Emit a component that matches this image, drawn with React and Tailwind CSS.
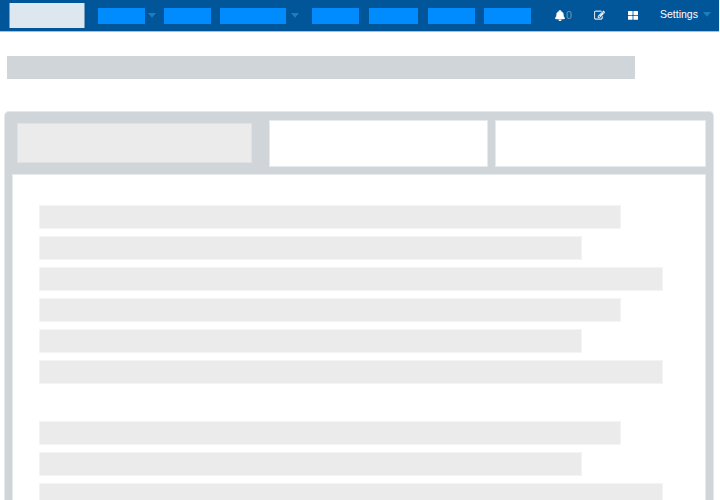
import React from "react";
import { FaBell } from "react-icons/fa";

function Caret() {
  return (
    <svg className="h-[5px] w-2 shrink-0" viewBox="0 0 8 5">
      <path d="M0 0h8L4 4.8z" fill="#1b7fbe" />
    </svg>
  );
}

function NavItem({ className }) {
  return <div className={`h-4 shrink-0 bg-[#008cff] ${className}`} />;
}

function PencilSquare() {
  return (
    <svg
      className="h-[11px] w-[11px] shrink-0"
      viewBox="0 0 1792 1792"
      fill="#f1f6fa"
      stroke="#f1f6fa"
      strokeWidth="50"
    >
      <path d="M888 1184l116-116-152-152-116 116v56h96v96h56zm440-720q-16-16-33 1l-350 350q-17 17-1 33t33-1l350-350q17-17 1-33zm80 594v190q0 119-84.5 203.5t-203.5 84.5h-832q-119 0-203.5-84.5t-84.5-203.5v-832q0-119 84.5-203.5t203.5-84.5h832q63 0 117 25 15 7 18 23 3 17-9 29l-49 49q-14 14-32 8-23-6-45-6h-832q-66 0-113 47t-47 113v832q0 66 47 113t113 47h832q66 0 113-47t47-113v-126q0-13 9-22l64-64q15-15 35-7t20 29zm-96-738l288 288-672 672h-288v-288zm444 132l-92 92-288-288 92-92q28-28 68-28t68 28l152 152q28 28 28 68t-28 68z" />
    </svg>
  );
}

function Line({ className }) {
  return <div className={`h-6 shrink-0 border border-[#f4f4f4] bg-[#ebebeb] ${className}`} />;
}

function LineGroup() {
  return (
    <>
      <Line className="w-[582px]" />
      <Line className="w-[543px]" />
      <Line className="w-[624px]" />
    </>
  );
}

export default function App() {
  return (
    <div className="flex h-[500px] w-[720px] flex-col overflow-hidden bg-white font-['Liberation_Sans',Arial,sans-serif]">
      <header className="flex h-8 w-[719px] shrink-0 items-start border-b border-[#9fc1dc] bg-[#005699]">
        <div className="ml-[9px] mt-[3px] h-[25px] w-[76px] shrink-0 rounded-[1px] border-x border-[#6f9fc5] bg-[#dce7f0]" />
        <nav className="ml-[13px] mt-2 flex h-4 items-start">
          <NavItem className="w-[47px]" />
          <div className="mt-[5px] flex w-[19px] pl-[3px]"><Caret /></div>
          <NavItem className="w-[47px]" />
          <NavItem className="ml-[9px] w-[66px]" />
          <div className="mt-[5px] flex w-[26px] pl-[5px]"><Caret /></div>
          <NavItem className="w-[47px]" />
          <NavItem className="ml-[10px] w-[49px]" />
          <NavItem className="ml-[10px] w-[47px]" />
          <NavItem className="ml-[9px] w-[47px]" />
        </nav>
        <div className="ml-6 mt-[10px] flex h-[11px] w-[39px] shrink-0 items-center">
          <FaBell className="h-[11px] w-[10px] shrink-0 stroke-white stroke-[20] text-white" />
          <span className="ml-px text-[10.5px] leading-[11px] text-[#8294a6]">0</span>
        </div>
        <div className="mt-[10px] flex w-[34px] shrink-0">
          <PencilSquare />
        </div>
        <svg className="mt-[11px] h-[9px] w-[10px] shrink-0" viewBox="0 0 10 9" fill="#fff">
          <rect width="4.6" height="4" rx=".6" />
          <rect x="5.4" width="4.6" height="4" rx=".6" />
          <rect y="4.8" width="4.6" height="4" rx=".6" />
          <rect x="5.4" y="4.8" width="4.6" height="4" rx=".6" />
        </svg>
        <div className="ml-[22px] mt-2 flex shrink-0 items-start">
          <span className="w-[43px] whitespace-nowrap text-[10.5px] leading-3 text-white">Settings</span>
          <div className="mt-[4px] flex"><Caret /></div>
        </div>
      </header>

      <div className="ml-[7px] mt-6 h-[23px] w-[628px] shrink-0 bg-[#cfd5d8]" />

      <main className="ml-1 mt-8 flex w-[710px] grow flex-col rounded-t-[5px] border border-b-0 border-[#e5e9eb] bg-[#cfd5d8] px-[7px]">
        <div className="flex h-[62px] shrink-0 items-start pt-2">
          <div className="ml-[5px] mt-[3px] h-10 w-[235px] border border-[#dfe2e3] bg-[#ebebeb]" />
          <div className="ml-[17px] h-[47px] w-[219px] border border-[#e7eaeb] bg-white" />
          <div className="ml-[7px] h-[47px] w-[211px] border border-[#e7eaeb] bg-white" />
        </div>
        <section className="flex h-[326px] shrink-0 flex-col gap-[7px] border border-b-0 border-[#e7eaeb] bg-white pl-[26px] pt-[30px]">
          <LineGroup />
          <LineGroup />
          <div className="h-[23px] shrink-0" />
          <LineGroup />
        </section>
      </main>
    </div>
  );
}
